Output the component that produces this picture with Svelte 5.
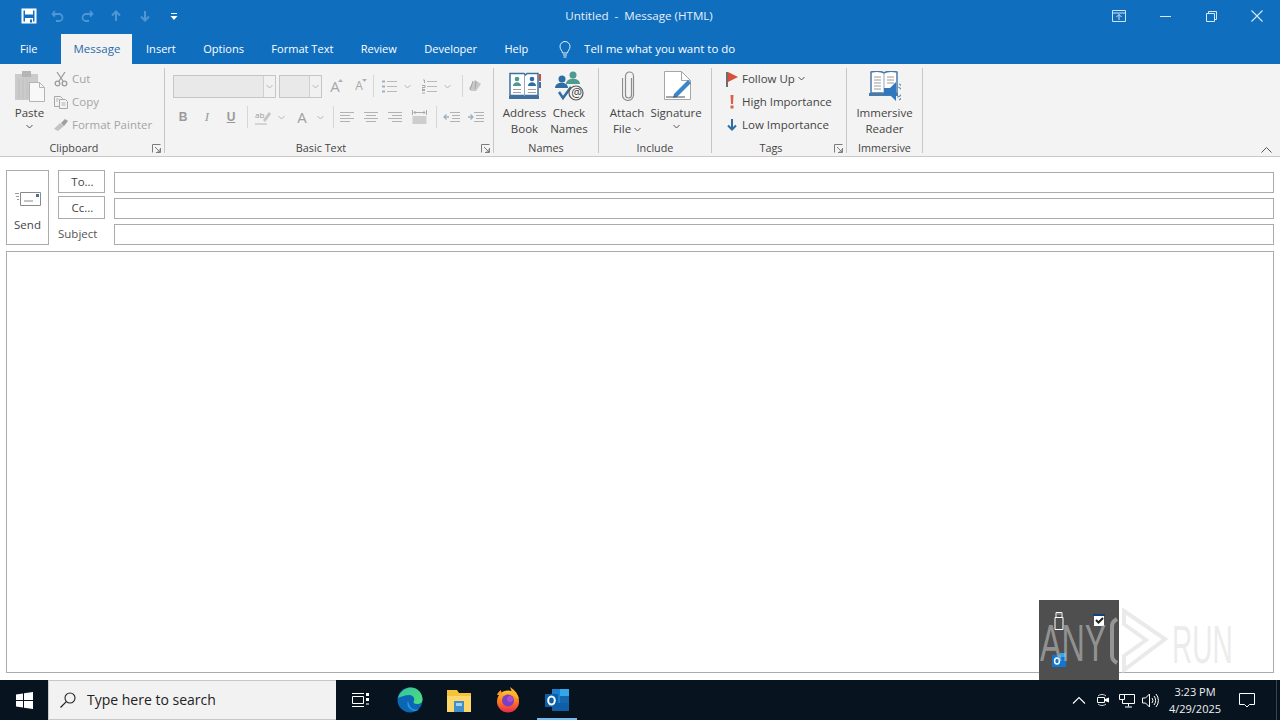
<script>
  const tabs = ['Insert', 'Options', 'Format Text', 'Review', 'Developer', 'Help'];
</script>

{#snippet chev(cls = '')}
  <svg class="chev {cls}" width="7" height="5" viewBox="0 0 7 5"><path d="M.5 1 3.500 4 6.500 1" fill="none" stroke="currentColor"/></svg>
{/snippet}

{#snippet launcher()}
  <svg class="launcher" width="9" height="9" viewBox="0 0 9 9"><path d="M.5 8.500V.5h8M8.500 4v4.500H4M3 3l5 5M8 5v3H5" fill="none" stroke="#7c7c7c"/></svg>
{/snippet}

<div class="window">
  <header class="titlebar">
    <div class="qat">
      <span class="q"><svg width="16" height="16" viewBox="0 0 16 16"><path d="M1.500 1.500h13v13h-13z" fill="none" stroke="#fff" stroke-width="2"/><path d="M4 1.500h8v5H4zM4 10h8v5H4z" fill="#fff"/><path d="M9 11.500h2v3H9z" fill="#106ebe"/></svg></span>
      <span class="q"><svg width="16" height="16" viewBox="0 0 16 16"><path d="M5 3 2.500 6 5 8.500M3 6h6a3.500 3.500 0 0 1 0 7H6" fill="none" stroke="#4d97d5" stroke-width="1.800"/></svg></span>
      <span class="q"><svg width="16" height="16" viewBox="0 0 16 16"><path d="M11 3l2.500 3L11 8.500M13 6H7a3.500 3.500 0 0 0 0 7h3" fill="none" stroke="#4d97d5" stroke-width="1.800"/></svg></span>
      <span class="q"><svg width="12" height="12" viewBox="0 0 12 12"><path d="M6 11V2M2 5.500 6 1.500l4 4" fill="none" stroke="#4d97d5" stroke-width="2"/></svg></span>
      <span class="q"><svg width="12" height="12" viewBox="0 0 12 12"><path d="M6 1v9M2 6.500l4 4 4-4" fill="none" stroke="#4d97d5" stroke-width="2"/></svg></span>
      <span class="q"><svg width="8" height="9" viewBox="0 0 8 9"><path d="M1 1.500h6" stroke="#fff"/><path d="M.5 4h7L4 8z" fill="#fff"/></svg></span>
    </div>
    <div class="title">Untitled&nbsp; -&nbsp; Message (HTML)</div>
    <div class="winbtns">
      <span class="wb"><svg width="14" height="12" viewBox="0 0 14 12"><path d="M.5.500h13v11H.5zM.5 3h13" fill="none" stroke="#cfe4f7"/><path d="M7 10V4.500M4.500 7 7 4.500 9.500 7" fill="none" stroke="#cfe4f7"/></svg></span>
      <span class="wb"><svg width="11" height="1" viewBox="0 0 11 1"><path d="M0 .5h11" stroke="#d7e9f8"/></svg></span>
      <span class="wb"><svg width="11" height="11" viewBox="0 0 11 11"><path d="M.5 2.500h8v8h-8zM2.500 2.500V.5h8v8h-2" fill="none" stroke="#d7e9f8"/></svg></span>
      <span class="wb"><svg width="12" height="12" viewBox="0 0 12 12"><path d="M.5.500l11 11M11.500.500l-11 11" stroke="#d7e9f8" stroke-width="1.100"/></svg></span>
    </div>
  </header>

  <nav class="tabs">
    <span class="tab file">File</span>
    <span class="tab active">Message</span>
    {#each tabs as t}<span class="tab">{t}</span>{/each}
    <span class="tell">
      <svg width="14" height="17" viewBox="0 0 14 17"><path d="M4.500 12c0-2-2.500-3.500-2.500-6.500a5 5 0 0 1 10 0c0 3-2.500 4.500-2.500 6.500zM5 14h4M5.500 16h3" fill="none" stroke="#e7f1fa"/></svg>
      Tell me what you want to do
    </span>
  </nav>

  <section class="ribbon">
    <div class="group g-clip">
      <div class="body">
        <div class="tall paste">
          <div class="ticon">
            <svg width="32" height="34" viewBox="0 0 32 34"><path d="M1 5h23v26H1z" fill="#cbcbcb"/><path d="M8 2h9v6H8z" fill="#b5b5b5"/><path d="M5 10v20M9 10v20M13 10v20" stroke="#c0c0c0"/><path d="M15.500 13.500h10l5 5v14h-15z" fill="#f8f8f8" stroke="#b4b4b4"/><path d="M25.500 13.500v5h5" fill="none" stroke="#b4b4b4"/></svg>
          </div>
          <span class="lbl dark">Paste</span>
          {@render chev('c-dark')}
        </div>
        <div class="smalls">
          <div class="srow dis">
            <svg class="sic" width="16" height="16" viewBox="0 0 16 16"><path d="M4 1l6 9M12 1 6 10" stroke="#9c9c9c" stroke-width="1.300" fill="none"/><circle cx="4.500" cy="12.500" r="2.300" fill="none" stroke="#9c9c9c" stroke-width="1.300"/><circle cx="11.500" cy="12.500" r="2.300" fill="none" stroke="#9c9c9c" stroke-width="1.300"/></svg>
            Cut
          </div>
          <div class="srow dis">
            <svg class="sic" width="16" height="16" viewBox="0 0 16 16"><path d="M1.500 2.500h6l2 2v8h-8z" fill="#f3f3f3" stroke="#a8a8a8"/><path d="M6.500 5.500h6l2 2v7h-8z" fill="#f3f3f3" stroke="#a8a8a8"/><path d="M8.500 9h4M8.500 11h4M3 5h3M3 7h2" stroke="#b5b5b5"/></svg>
            Copy
          </div>
          <div class="srow dis">
            <svg class="sic" width="16" height="16" viewBox="0 0 16 16"><path d="M1 12l6-6 4 3-6 5z" fill="#c2c2c2"/><path d="M8 6l4-4 3 2-4 5z" fill="#9e9e9e"/></svg>
            Format Painter
          </div>
        </div>
      </div>
      <div class="glabel"><span>Clipboard</span>{@render launcher()}</div>
    </div>

    <div class="group g-basic">
      <div class="body stack">
        <div class="brow r1">
          <div class="combo w-font"><i></i><b>{@render chev()}</b></div>
          <div class="combo w-size"><i></i><b>{@render chev()}</b></div>
          <span class="ib w24"><span class="bigA">A</span><svg class="sup" width="5" height="3" viewBox="0 0 5 3"><path d="M0 3l2.500-3L5 3z" fill="#b0b0b0"/></svg></span>
          <span class="ib w24"><span class="bigA sm">A</span><svg class="sup" width="5" height="3" viewBox="0 0 5 3"><path d="M0 0l2.500 3L5 0z" fill="#b0b0b0"/></svg></span>
          <span class="vsep ml1"></span>
          <span class="ib w20 ml5">
            <svg width="15" height="15" viewBox="0 0 15 15"><path d="M5 2.500h10M5 7.500h10M5 12.500h10" stroke="#b9b9b9"/><path d="M0 1.500h3v2H0zM0 6.500h3v2H0zM0 11.500h3v2H0z" fill="#9fb1c0"/></svg>
          </span>
          <span class="ib w16">{@render chev()}</span>
          <span class="ib w20 ml4">
            <svg width="15" height="15" viewBox="0 0 15 15"><path d="M5 2.500h10M5 7.500h10M5 12.500h10" stroke="#b9b9b9"/><path d="M1 1h1.500v3M0 6.500h3v2H0v2h3M0 11.500h3M0 14h3" fill="none" stroke="#a8a8a8"/></svg>
          </span>
          <span class="ib w16">{@render chev()}</span>
          <span class="vsep ml7"></span>
          <span class="ib w22 ml1">
            <svg width="16" height="16" viewBox="0 0 16 16"><path d="M4 13l-2-3 6-8 6 4-5 7z" fill="#c8c8c8"/><path d="M6 3l-3 9M9 3l-1 8" stroke="#a4a4a4" fill="none"/></svg>
          </span>
        </div>
        <div class="brow r2">
          <span class="ib w24 fmt bold">B</span>
          <span class="ib w24 fmt ital">I</span>
          <span class="ib w24 fmt und">U</span>
          <span class="vsep ml4"></span>
          <span class="ib w24 ml3">
            <svg width="18" height="17" viewBox="0 0 18 17"><path d="M9 11l6-8 2 2-6 8z" fill="#c4c4c4"/><path d="M1 14h12v2H1z" fill="#d4d4d4"/><text x="1" y="9" class="abtxt">ab</text></svg>
          </span>
          <span class="ib w12">{@render chev()}</span>
          <span class="ib w24 ml3 colorA">A</span>
          <span class="ib w12">{@render chev()}</span>
          <span class="vsep ml7"></span>
          <span class="ib w24 ml1"><svg width="14" height="13" viewBox="0 0 14 13"><path d="M0 1.500h14M0 4.500h10M0 7.500h14M0 10.500h10" stroke="#b2b2b2"/></svg></span>
          <span class="ib w24"><svg width="14" height="13" viewBox="0 0 14 13"><path d="M0 1.500h14M2 4.500h10M0 7.500h14M2 10.500h10" stroke="#b2b2b2"/></svg></span>
          <span class="ib w24"><svg width="14" height="13" viewBox="0 0 14 13"><path d="M0 1.500h14M4 4.500h10M0 7.500h14M4 10.500h10" stroke="#b2b2b2"/></svg></span>
          <span class="ib w24"><svg width="15" height="16" viewBox="0 0 15 16"><path d="M.5 1v5M14.500 1v5M2 3.500h11M3.500 2 2 3.500 3.500 5M11.500 2 13 3.500 11.500 5" fill="none" stroke="#a8a8a8"/><path d="M.5 8h14M.5 10h14M.5 12h14M.5 14h14" stroke="#a8a8a8"/></svg></span>
          <span class="vsep ml5"></span>
          <span class="ib w24 ml2"><svg width="17" height="13" viewBox="0 0 17 13"><path d="M7 1.500h10M9 4.500h8M9 7.500h8M7 10.500h10" stroke="#b2b2b2"/><path d="M6 6H1M3.500 3.500 1 6l2.500 2.500" fill="none" stroke="#9fb1c0" stroke-width="1.300"/></svg></span>
          <span class="ib w24"><svg width="17" height="13" viewBox="0 0 17 13"><path d="M7 1.500h10M9 4.500h8M9 7.500h8M7 10.500h10" stroke="#b2b2b2"/><path d="M1 6h5M3.500 3.500 6 6 3.500 8.500" fill="none" stroke="#9fb1c0" stroke-width="1.300"/></svg></span>
        </div>
      </div>
      <div class="glabel"><span>Basic Text</span>{@render launcher()}</div>
    </div>

    <div class="group g-names">
      <div class="body">
        <div class="tall w-addr">
          <div class="ticon">
            <svg width="32" height="29" viewBox="0 0 32 29"><path d="M1 1.500h14l1.500 1.500 1.500-1.500h11v22H1z" fill="#fff" stroke="#3f6f9f" stroke-width="1.500"/><path d="M0 24h30v3H0z" fill="#3f6f9f"/><path d="M30 2h2v7h-2z" fill="#c9503c"/><path d="M30 10h2v6h-2z" fill="#3f6f9f"/><path d="M15.500 3v21" stroke="#8da9c4"/><circle cx="8" cy="7" r="2.300" fill="#4f9a8f"/><path d="M4 14c0-5 8-5 8 0z" fill="#4f9a8f"/><circle cx="23" cy="7" r="2.300" fill="#2f6ea5"/><path d="M19 14c0-5 8-5 8 0z" fill="#2f6ea5"/><path d="M4 17.500h8M4 20.500h8M19 17.500h8M19 20.500h8" stroke="#a0a0a0"/></svg>
          </div>
          <span class="lbl dark">Address</span><span class="lbl dark">Book</span>
        </div>
        <div class="tall w-check">
          <div class="ticon">
            <svg width="32" height="32" viewBox="0 0 32 32"><circle cx="9" cy="9" r="3.500" fill="#2f6ea5"/><path d="M2 18c0-7 13-7 13 0z" fill="#2f6ea5"/><circle cx="20" cy="5" r="3.500" fill="#4f9a8f"/><path d="M13 14c0-7 14-7 14 0z" fill="#4f9a8f"/><path d="M6 22l4 6 8-11" fill="none" stroke="#2f6ea5" stroke-width="2.500"/><circle cx="23" cy="23" r="7" fill="#f3f3f3" stroke="#555" stroke-width="1.200"/><text x="18.300" y="27" class="attxt">@</text></svg>
          </div>
          <span class="lbl dark">Check</span><span class="lbl dark">Names</span>
        </div>
      </div>
      <div class="glabel"><span>Names</span></div>
    </div>

    <div class="group g-incl">
      <div class="body">
        <div class="tall w-attach">
          <div class="ticon">
            <svg class="clip" width="13" height="30" viewBox="0 0 13 30"><path d="M9.500 7v17a3 3 0 0 1-6 0V5a4 4 0 0 1 8 0v19a5.500 5.500 0 0 1-11 0V7" fill="none" stroke="#8c8c8c" stroke-width="1.200"/></svg>
          </div>
          <span class="lbl dark">Attach</span>
          <span class="lbl dark">File {@render chev('c-dark')}</span>
        </div>
        <div class="tall w-sign">
          <div class="ticon">
            <svg class="sign" width="28" height="30" viewBox="0 0 28 30"><path d="M.5.500h17l9 9v19H.5z" fill="#fff" stroke="#a6a6a6"/><path d="M17.500.500v9h9" fill="none" stroke="#a6a6a6"/><path d="M10 23 24 9l3 3-14 14-4 1z" fill="#3a86c8"/><path d="M2 26h19" stroke="#4f4f4f"/></svg>
          </div>
          <span class="lbl dark">Signature</span>
          {@render chev('c-dark')}
        </div>
      </div>
      <div class="glabel"><span>Include</span></div>
    </div>

    <div class="group g-tags">
      <div class="body">
        <div class="smalls tag">
          <div class="srow">
            <svg class="sic" width="14" height="16" viewBox="0 0 14 16"><path d="M1 1h2v15H1z" fill="#6d6d6d"/><path d="M3 1l10 5-10 5z" fill="#d9503a"/></svg>
            Follow Up {@render chev('c-dark')}
          </div>
          <div class="srow">
            <svg class="sic" width="14" height="16" viewBox="0 0 14 16"><path d="M5.500 1h3l-.5 9H6zM5.500 11.500h3v3h-3z" fill="#d9604a"/></svg>
            High Importance
          </div>
          <div class="srow">
            <svg class="sic" width="14" height="16" viewBox="0 0 14 16"><path d="M7 2v10M3 8.500 7 12.500l4-4" fill="none" stroke="#2f6ea5" stroke-width="2"/></svg>
            Low Importance
          </div>
        </div>
      </div>
      <div class="glabel"><span>Tags</span>{@render launcher()}</div>
    </div>

    <div class="group g-imm">
      <div class="body">
        <div class="tall w-imm">
          <div class="ticon">
            <svg width="32" height="30" viewBox="0 0 32 30"><path d="M2 1c5-1 10-1 13 1 3-2 9-2 13-1v21H2z" fill="#fff" stroke="#4a7aa8" stroke-width="1.500"/><path d="M0 22h29v3H0z" fill="#4a7aa8"/><path d="M15 2v20" stroke="#8da9c4"/><path d="M5 6h7M5 9h7M5 12h7M5 15h7M5 18h7M18 6h7M18 9h7M18 12h7" stroke="#9a9a9a"/><path d="M15 17h6l6-6v19l-6-6h-6z" fill="#2f78c0"/><path d="M28 16a5 5 0 0 1 0 10M30 13a9 9 0 0 1 0 16" fill="none" stroke="#5f97c9" stroke-width="1.200"/></svg>
          </div>
          <span class="lbl dark">Immersive</span><span class="lbl dark">Reader</span>
        </div>
      </div>
      <div class="glabel"><span>Immersive</span></div>
    </div>

    <svg class="collapse" width="11" height="6" viewBox="0 0 11 6"><path d="M.5 5.500l5-5 5 5" fill="none" stroke="#555"/></svg>
  </section>

  <main class="compose">
    <div class="fields">
      <div class="send">
        <svg width="26" height="16" viewBox="0 0 26 16"><path d="M5.500 1.500h20v13h-20z" fill="#fff" stroke="#8a8a8a"/><path d="M21 3h3v3h-3z" fill="#4a6f92"/><path d="M9 10h9" stroke="#8a8a8a"/><path d="M0 2.500h4M1 5.500h3M2 8.500h2" stroke="#9a9a9a"/></svg>
        <span>Send</span>
      </div>
      <div class="fbtn">To...</div>
      <div class="finput"></div>
      <div class="fbtn">Cc...</div>
      <div class="finput"></div>
      <div class="flabel">Subject</div>
      <div class="finput"></div>
    </div>
    <div class="editor"></div>
  </main>

  <footer class="taskbar">
    <span class="start"><svg width="17" height="17" viewBox="0 0 17 17"><path d="M0 2.400 7 1.400V8H0zM8 1.300 17 0v8H8zM0 9h7v6.600l-7-1zM8 9h9v8l-9-1.300z" fill="#fff"/></svg></span>
    <div class="search">
      <svg width="16" height="16" viewBox="0 0 16 16"><circle cx="10" cy="6" r="5" fill="none" stroke="#222" stroke-width="1.100"/><path d="M6.300 9.700.5 15.500" stroke="#222" stroke-width="1.200"/></svg>
      <span>Type here to search</span>
    </div>
    <span class="tb tv"><svg width="17" height="16" viewBox="0 0 17 16"><path d="M.5 4.500h11v7H.5zM0 1.500h12M0 14.500h12" fill="none" stroke="#fff"/><path d="M14 1h3v3h-3zM14 6h3v3h-3z" fill="#fff"/><path d="M14 12h3" stroke="#fff"/></svg></span>
    <span class="tb"><svg width="26" height="26" viewBox="0 0 26 26"><defs><linearGradient id="ed1" x1="0" y1="0" x2="1" y2="1"><stop offset="0" stop-color="#35c1a0"/><stop offset="1" stop-color="#4fe07a"/></linearGradient></defs><circle cx="13" cy="13" r="12.500" fill="#0c66b6"/><path d="M1 11C3 3 10 .5 14 .5c7 0 11.500 6 11.500 12 0 3-2.500 4.500-5 4.500-3 0-4-1-4-2 2-3 0-7-4-7-5 0-9 2-11.500 3z" fill="url(#ed1)"/><path d="M11 14c-2 4 1 9 7 10 2 0 3-1 4-2-5 2-9 0-11-8z" fill="#2a9ae0"/></svg></span>
    <span class="tb"><svg width="24" height="23" viewBox="0 0 24 23"><path d="M0 1h10l2 3h12v19H0z" fill="#f5c33b"/><path d="M0 7h24v16H0z" fill="#fbd869"/><path d="M7 12h10v11H7z" fill="#3e8fcb"/><path d="M9 14h6v3H9z" fill="#a7d0ee"/></svg></span>
    <span class="tb"><svg width="26" height="26" viewBox="0 0 26 26"><defs><linearGradient id="ff1" x1="0" y1="0" x2="0" y2="1"><stop offset="0" stop-color="#ffc72b"/><stop offset=".5" stop-color="#ff7a1f"/><stop offset="1" stop-color="#e8274d"/></linearGradient></defs><circle cx="13" cy="14.500" r="11" fill="url(#ff1)"/><path d="M15 0c5 3 8 7 9 12l-6-4z" fill="#ffb52b"/><path d="M2 8c1-3 3-4 4-5l1 5z" fill="#ff9a2b"/><circle cx="13" cy="13.500" r="6" fill="#7b3fc4"/><circle cx="15" cy="12" r="3" fill="#b34bd0"/></svg></span>
    <span class="tb outlook">
      <svg width="26" height="24" viewBox="0 0 26 24"><path d="M8 1h17v22H8z" fill="#1b7fd1"/><path d="M16 1h9v7h-9z" fill="#32a8ea"/><path d="M16 8h9v7h-9z" fill="#1565b0"/><path d="M8 15h17v8H8z" fill="#0f5ea8"/><path d="M1 6h13v13H1z" fill="#0a5fa8"/><ellipse cx="7.500" cy="12.500" rx="3.300" ry="4" fill="none" stroke="#fff" stroke-width="2"/></svg>
    </span>
    <div class="tray">
      <svg class="t1" width="14" height="8" viewBox="0 0 14 8"><path d="M1 7.500l6-6 6 6" fill="none" stroke="#fff" stroke-width="1.100"/></svg>
      <svg class="t2" width="14" height="16" viewBox="0 0 14 16"><path d="M2 4a6 6 0 0 1 8 0M2 12a6 6 0 0 0 8 0" fill="none" stroke="#cfcfcf"/><path d="M1.500 5.500h7v5h-7z" fill="none" stroke="#fff"/><path d="M9 7l4-1.500v5L9 9z" fill="#fff"/></svg>
      <svg class="t3" width="16" height="15" viewBox="0 0 16 15"><path d="M3.500 1.500h12v9h-12zM9.500 10.500v3M6 14h7" fill="none" stroke="#fff"/><path d="M.5 1.500h5v5h-5z" fill="#0b1622" stroke="#fff"/></svg>
      <svg class="t4" width="17" height="15" viewBox="0 0 17 15"><path d="M.5 5h3l4-4v13l-4-4h-3z" fill="none" stroke="#fff"/><path d="M10 5a4 4 0 0 1 0 5M12 3a7 7 0 0 1 0 9M14 1a10 10 0 0 1 0 13" fill="none" stroke="#fff"/></svg>
      <div class="clock"><span>3:23 PM</span><span>4/29/2025</span></div>
      <svg class="t5" width="16" height="15" viewBox="0 0 16 15"><path d="M.5.500h15v11h-5l-2.500 2.500-2.500-2.500h-5z" fill="none" stroke="#fff"/></svg>
      <span class="edge"></span>
    </div>
  </footer>

  <div class="ghost">
    <svg class="gic a" width="12" height="18" viewBox="0 0 12 18"><path d="M3 .5h6v5H3zM2 5.500h8v12H2z" fill="none" stroke="#fff"/><path d="M4.500 2h1M6.500 2h1" stroke="#fff"/></svg>
    <svg class="gic b" width="14" height="14" viewBox="0 0 14 14"><path d="M1 1h12v2H1z" fill="#14407f"/><path d="M2 3h10v10H2z" fill="#fff"/><path d="M4 7l2.500 2.500L11 5" fill="none" stroke="#222" stroke-width="2"/></svg>
    <svg class="gic c" width="14" height="14" viewBox="0 0 14 14"><path d="M0 2h14v12H0z" fill="#1277cf"/><path d="M8 0h6v4H8z" fill="#32a8ea"/><ellipse cx="5" cy="8" rx="2.400" ry="3" fill="none" stroke="#fff" stroke-width="1.500"/></svg>
  </div>

  <div class="mark" aria-hidden="true">
    <span class="any">ANY</span>
    <svg width="60" height="70" viewBox="0 0 60 70"><path d="M16 5 57 33 16 64V50l22-16L16 18z" fill="none" stroke="#dcdcdc" stroke-width="4" opacity=".6"/><path d="M9 13C4 16 4 18 4 22v26c0 4 0 6 5 9" fill="none" stroke="#c4c4c4" stroke-width="4" opacity=".6"/></svg>
    <span class="run">RUN</span>
  </div>
</div>

<style>
  :global(body) { margin: 0; background: #fff; }
  .window {
    position: relative; width: 1280px; height: 720px; overflow: hidden;
    display: flex; flex-direction: column;
    font: 11.500px/16px "Open Sans", "Noto Sans", sans-serif; color: #444;
  }
  svg { display: block; flex: none; }

  .titlebar {
    height: 32px; background: #106ebe; color: #e6f0fa;
    display: grid; grid-template-columns: 1fr auto 1fr; align-items: center;
  }
  .qat { display: flex; padding-left: 14px; }
  .q { width: 29px; height: 32px; display: flex; align-items: center; justify-content: center; }
  .title { font-size: 11.600px; margin-left: -2px; }
  .winbtns { display: flex; justify-content: flex-end; }
  .wb { width: 46px; height: 32px; display: flex; align-items: center; justify-content: center; }

  .tabs { height: 32px; background: #106ebe; display: flex; align-items: stretch; color: #fff; }
  .tab { padding: 2px 13.700px 0; display: flex; align-items: center; font-size: 11.050px; }
  .tab.file { padding: 2px 24px 0 20px; }
  .tab.active { background: #f3f3f3; color: #2b6aa8; padding: 0 12px; margin-top: 2px; font-size: 11.500px; }
  .tell { display: flex; align-items: center; gap: 12px; margin-left: 16px; padding-top: 2px; color: #fff; }

  .ribbon {
    height: 93px; box-sizing: border-box; background: #f3f3f3;
    border-bottom: 1px solid #c9c9c9; padding: 4px 0 3px;
    display: flex; position: relative;
  }
  .group { box-sizing: border-box; border-right: 1px solid #c6c6c6; display: flex; flex-direction: column; }
  .g-clip { width: 165px; } .g-basic { width: 329px; } .g-names { width: 105px; }
  .g-incl { width: 113px; } .g-tags { width: 135px; } .g-imm { width: 76px; }
  .body { flex: 1; display: flex; min-height: 0; }
  .body.stack { flex-direction: column; }
  .glabel { height: 14px; display: flex; align-items: center; font-size: 10.800px; line-height: 14px; margin-bottom: -2px; }
  .glabel span { flex: 1; text-align: center; }
  .launcher { margin: 0 3px 0 4px; }

  .tall { display: flex; flex-direction: column; align-items: center; flex: none; color: #444; }
  .ticon { height: 36px; width: 100%; display: flex; align-items: center; justify-content: center; margin-bottom: 1px; }
  .lbl { display: flex; align-items: center; gap: 3px; white-space: nowrap; height: 16px; }
  .dark { color: #444; }
  .paste { width: 47px; margin-left: 6px; }
  .chev { color: #b5b5b5; }
  .c-dark { color: #555; }
  .paste .chev, .w-sign .chev { margin-top: 3px; }
  .w-addr { width: 45px; margin-left: 8px; }
  .w-check { width: 44px; }
  .w-attach { width: 40px; margin-left: 8px; }
  .w-sign { width: 52px; margin-left: 3px; }
  .w-imm { width: 75px; }
  .clip { margin-left: 3px; }
  .sign { margin-left: 4px; }

  .smalls { display: flex; flex-direction: column; margin-top: -1px; }
  .srow { height: 23px; display: flex; align-items: center; gap: 3px; white-space: nowrap; }
  .srow.dis { color: #a4a4a4; }
  .tag { padding-left: 13px; }

  .brow { display: flex; align-items: flex-start; }
  .r1 { height: 24px; padding: 7px 0 0 8px; }
  .r2 { height: 23px; padding: 7px 0 0 6px; }
  .combo { height: 23px; box-sizing: border-box; border: 1px solid #c6c6c6; display: flex; background: #e9e9e9; }
  .combo i { flex: 1; }
  .combo b { width: 11px; border-left: 1px solid #d0d0d0; background: #f1f1f1; display: flex; align-items: center; justify-content: center; }
  .w-font { width: 103px; margin-right: 3px; }
  .w-size { width: 43px; margin-right: 1px; }
  .ib { display: flex; align-items: center; justify-content: center; height: 22px; position: relative; flex: none; }
  .w12 { width: 12px; } .w16 { width: 16px; } .w20 { width: 20px; } .w22 { width: 22px; } .w24 { width: 24px; }
  .ml1 { margin-left: 1px; } .ml2 { margin-left: 2px; } .ml3 { margin-left: 3px; } .ml4 { margin-left: 4px; }
  .ml5 { margin-left: 5px; } .ml7 { margin-left: 7px; }
  .r1 .vsep.ml1 { margin-left: 2px; }
  .vsep { width: 1px; height: 22px; background: #d6d6d6; flex: none; }
  .bigA { font-size: 15px; color: #a8a8a8; }
  .bigA.sm { font-size: 12px; }
  .sup { position: absolute; top: 4px; right: 4px; }
  .fmt { color: #9a9a9a; font-size: 12px; }
  .bold { font-weight: 700; font-family: "Liberation Sans", sans-serif; }
  .ital { font-style: italic; font-family: "Liberation Serif", serif; font-size: 13px; }
  .und { text-decoration: underline; font-weight: 700; font-family: "Liberation Sans", sans-serif; }
  .colorA { color: #a0a0a0; font-size: 15px; }
  .abtxt { font: 8px "Open Sans", sans-serif; fill: #9a9a9a; }
  .attxt { font: 12px "Open Sans", sans-serif; fill: #444; }

  .collapse { position: absolute; right: 8px; bottom: 3px; }

  .compose { flex: 1; display: flex; flex-direction: column; padding: 13px 6px 7px; background: #fff; min-height: 0; }
  .fields {
    display: grid; grid-template-columns: 43px 47px 1fr; grid-template-rows: repeat(3, 26px);
    column-gap: 9px; height: 81px;
  }
  .send {
    grid-row: 1 / 4; height: 75px; box-sizing: border-box; border: 1px solid #ababab;
    display: flex; flex-direction: column; align-items: center; padding-top: 20px; gap: 10px; color: #444;
  }
  .fbtn { height: 23px; box-sizing: border-box; border: 1px solid #ababab; display: flex; align-items: center; justify-content: center; padding-left: 2px; }
  .finput { height: 21px; box-sizing: border-box; border: 1px solid #ababab; margin-top: 2px; }
  .flabel { display: flex; align-items: center; height: 23px; color: #555; }
  .editor { flex: 1; box-sizing: border-box; border: 1px solid #ababab; }

  .taskbar { height: 40px; background: #07131f; display: flex; align-items: center; flex: none; }
  .start { width: 48px; height: 40px; display: flex; align-items: center; justify-content: center; flex: none; }
  .search {
    flex: none; width: 288px; height: 40px; box-sizing: border-box; background: #f2f2f2; border: 1px solid #c8c8c8; border-width: 1px 0 1px 1px;
    display: flex; align-items: center; gap: 11px; padding-left: 11px;
    font-size: 14px; color: #222;
  }
  .tb { flex: none; width: 49px; height: 40px; display: flex; align-items: center; justify-content: center; box-sizing: border-box; }
  .tv { width: 49px; }
  .outlook { background: linear-gradient(#76b9ed, #76b9ed) center bottom / 40px 2px no-repeat; }
  .tray { flex: 1; display: flex; align-items: center; color: #fff; height: 40px; min-width: 0; }
  .tray .t1 { margin-left: 491px; }
  .tray .t2 { margin-left: 10px; }
  .tray .t3 { margin-left: 9px; }
  .tray .t4 { margin-left: 7px; }
  .clock { flex: none; width: 72px; margin-top: -1px; display: flex; flex-direction: column; align-items: center; font-size: 11px; line-height: 17px; color: #f0f0f0; }
  .tray .t5 { margin-left: 8px; }
  .edge { flex: none; width: 1px; height: 40px; background: #3a4550; margin-left: 21px; }

  .ghost { position: absolute; left: 1039px; top: 600px; width: 80px; height: 80px; background: #4f4f4f; }
  .gic { position: absolute; }
  .gic.a { left: 14px; top: 12px; }
  .gic.b { left: 53px; top: 13px; }
  .gic.c { left: 13px; top: 53px; }

  .mark { position: absolute; left: 1040px; top: 605px; width: 200px; height: 72px; display: flex; align-items: center; pointer-events: none; }
  .any, .run { font-family: "Liberation Sans", sans-serif; display: block; transform-origin: left center; flex: none; }
  .any { font-size: 52px; color: rgba(205, 205, 205, .55); transform: scaleX(.62); width: 68px; margin-top: 4px; }
  .run { font-size: 54px; color: rgba(205, 205, 205, .4); transform: scaleX(.52); margin-top: 6px; margin-left: 4px; }
</style>
